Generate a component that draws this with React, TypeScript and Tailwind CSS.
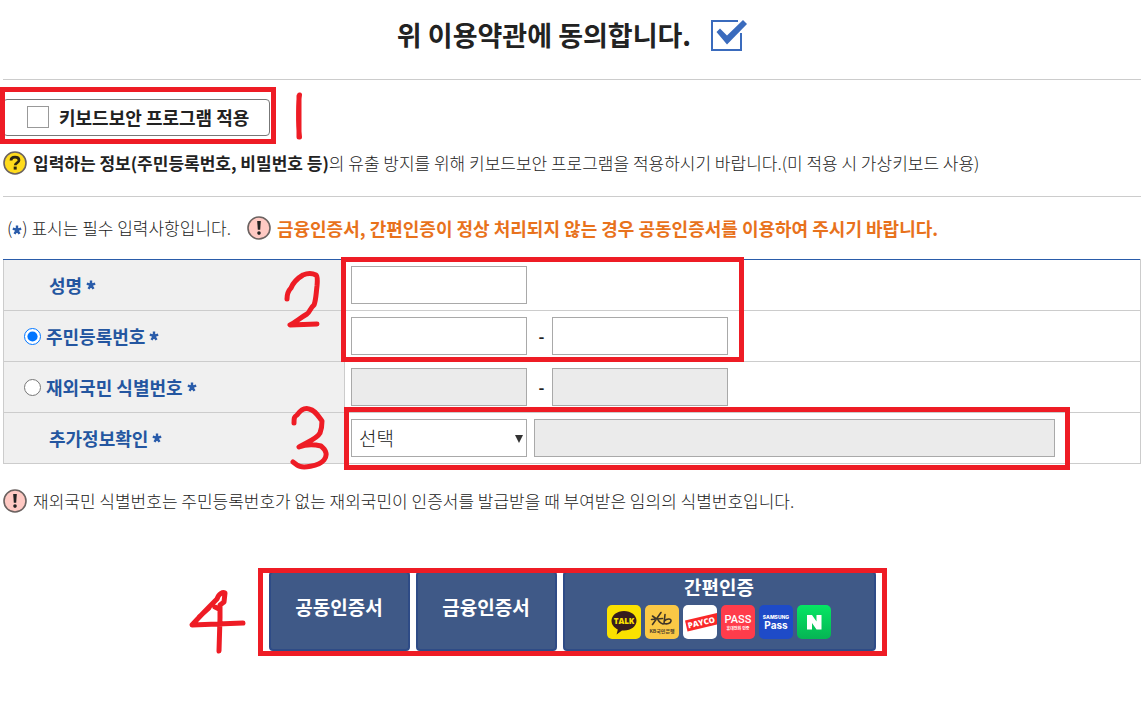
import { useState, type ReactNode } from 'react';

const FIELD = 'h-[38px] w-44 border border-[#a9a9a9] bg-white px-2 text-lg outline-none disabled:bg-[#ebebeb]';

function Star() {
  return (
    <svg viewBox="0 0 10 10" className="inline-block size-[10px] shrink-0" role="img" aria-label="필수">
      <path d="M5 5V.5M5 5L.8 3.700M5 5L9.200 3.700M5 5L2.500 8.900M5 5L7.500 8.900" stroke="#2a5caa" strokeWidth="2.4" />
    </svg>
  );
}

function MarkIcon({ kind }: { kind: 'question' | 'alert' }) {
  return (
    <svg viewBox="0 0 24 24" className="size-6 shrink-0" aria-hidden="true">
      <circle cx="12" cy="12" r="11" fill={kind === 'question' ? '#ffdb1c' : '#ffc9c3'} stroke="#6b6260" strokeWidth="1.6" />
      {kind === 'question' ? (
        <>
          <path d="M8 9.4C8 7 9.8 6.1 12 6.1s4 1.1 4 3.1c0 2.7-3.8 2.6-3.8 5" fill="none" stroke="#2d2613" strokeWidth="2.7" />
          <rect x="10.7" y="15.6" width="3" height="3" fill="#2d2613" />
        </>
      ) : (
        <>
          <path d="M10.2 5h3.6l-.6 8.8h-2.4z" fill="#222" />
          <circle cx="12" cy="17.1" r="1.8" fill="#222" />
        </>
      )}
    </svg>
  );
}

function Pen({ box, d, className }: { box: string; d: string; className: string }) {
  return (
    <svg viewBox={box} className={`pointer-events-none absolute ${className}`} fill="none" stroke="#ee1c25" strokeWidth="5" strokeLinecap="round" strokeLinejoin="round" aria-hidden="true">
      <path d={d} />
    </svg>
  );
}

function Frame({ className }: { className: string }) {
  return <div className={`pointer-events-none absolute border-5 border-[#ee1c25] ${className}`} />;
}

function Row({ head, children }: { head: ReactNode; children: ReactNode }) {
  return (
    <tr className="h-[51px] first:[&>*]:border-t-[#2a5caa]">
      <th scope="row" className="border border-[#ccc] bg-[#f0f0f0] p-0 text-left text-lg font-bold text-[#2456a0]">
        <div className="flex items-center pl-5">{head}</div>
      </th>
      <td className="border border-[#ccc] p-0">
        <div className="flex items-center pl-[6px]">{children}</div>
      </td>
    </tr>
  );
}

function Providers() {
  return (
    <span className="flex gap-1">
      <svg viewBox="0 0 34 34" className="size-[34px]" aria-label="TALK">
        <rect width="34" height="34" rx="5" fill="#fae100" />
        <path d="M17 6c7 0 12.5 4.3 12.5 9.8S24 25.5 17 25.5l-2-.1-5.4 4.2 1.2-5.2C7 22.800 4.500 19.500 4.500 15.800 4.500 10.300 10 6 17 6z" fill="#371d1e" />
        <text x="17" y="19" textAnchor="middle" fontSize="8" fontWeight="800" fontFamily="Open Sans, sans-serif" fill="#fae100">TALK</text>
      </svg>
      <svg viewBox="0 0 34 34" className="size-[34px]" aria-label="KB국민은행">
        <rect width="34" height="34" rx="5" fill="#fac846" />
        <path d="M7.500 11l4 3M16 7.500l-8.500 12M6.500 14.500l11-1M12.500 13.500c1 3 2.500 4.500 5.500 5.500M20 9.500l-1 9M19.500 16c2.500-3 7-2.500 6.500 0s-4 3.500-7 2.500" fill="none" stroke="#3f3427" strokeWidth="1.6" strokeLinecap="round" />
        <text x="17" y="28" textAnchor="middle" fontSize="5" fontWeight="700" fontFamily="Noto Sans CJK KR, sans-serif" fill="#4a3d2a">KB국민은행</text>
      </svg>
      <svg viewBox="0 0 34 34" className="size-[34px]" aria-label="PAYCO">
        <rect width="34" height="34" rx="5" fill="#fff" />
        <path d="M2 15.500L34 8v11.500L4.500 26.500z" fill="#fa2828" />
        <text x="5.500" y="23.500" fontSize="8" fontWeight="800" fontFamily="Open Sans, sans-serif" fill="#fff" transform="rotate(-13 5.500 23.500)">PAYCO</text>
      </svg>
      <svg viewBox="0 0 34 34" className="size-[34px]" aria-label="PASS">
        <rect width="34" height="34" rx="5" fill="#ff3c4b" />
        <text x="17" y="18" textAnchor="middle" fontSize="11" fontFamily="Roboto, sans-serif" fontWeight="500" fill="#fff">PASS</text>
        <text x="17" y="25" textAnchor="middle" fontSize="4" fontFamily="Noto Sans CJK KR, sans-serif" fill="#fff">휴대전화 인증</text>
      </svg>
      <svg viewBox="0 0 34 34" className="size-[34px]" aria-label="SAMSUNG Pass">
        <rect width="34" height="34" rx="5" fill="#1e4bc8" />
        <text x="17" y="14" textAnchor="middle" fontSize="5" fontWeight="800" fontFamily="Inter, sans-serif" fill="#fff">SAMSUNG</text>
        <text x="17" y="24" textAnchor="middle" fontSize="10" fontWeight="700" fontFamily="Inter, sans-serif" fill="#fff">Pass</text>
      </svg>
      <svg viewBox="0 0 34 34" className="size-[34px]" aria-label="N">
        <defs>
          <linearGradient id="green" x1="0" y1="0" x2="0" y2="1">
            <stop offset="0" stopColor="#05e663" />
            <stop offset="1" stopColor="#06b454" />
          </linearGradient>
        </defs>
        <rect width="34" height="34" rx="5" fill="url(#green)" />
        <path d="M10 10h5l4.500 6.500V10h5v14.500h-5L15 18v6.500h-5z" fill="#fff" />
      </svg>
    </span>
  );
}

export default function App() {
  const [idType, setIdType] = useState('resident');

  return (
    <main className="min-h-[712px] bg-white pl-[3px] font-['Noto_Sans_CJK_KR','Noto_Sans_CJK_SC',sans-serif] text-[#222]">
      <label className="flex h-20 items-center justify-center gap-5 border-b border-[#ccc] pb-2 text-[27px] font-bold">
        위 이용약관에 동의합니다.
        <span className="grid">
          <input type="checkbox" defaultChecked className="col-start-1 row-start-1 size-8 appearance-none" />
          <svg viewBox="0 0 36 32" className="pointer-events-none col-start-1 row-start-1 h-8 w-9" aria-hidden="true">
            <path d="M30 13v17H1V1h26" fill="none" stroke="#3a6bbd" strokeWidth="2" />
            <path d="M5.500 12l3.500-3.500 7 7L32 0l4 4-20 20.500z" fill="#3a6bbd" />
          </svg>
        </span>
      </label>

      <section className="border-b border-[#ccc] pt-[19px] pb-[21px]">
        <div className="relative w-[267px]">
          <label className="flex h-[37px] items-center gap-[10px] rounded border border-[#777] pb-[2px] pl-[23px] text-lg font-bold">
            <input type="checkbox" className="size-[22px] appearance-none border border-[#999] bg-white" />
            키보드보안 프로그램 적용
          </label>
          <Frame className="-top-3 -right-[6px] -bottom-2 -left-[3px]" />
          <Pen box="0 0 10 50" d="M5.500 4C4.500 9 4 32 5.500 46M5 5V46" className="-top-2 left-[291px] h-[50px] w-[10px]" />
        </div>
        <p className="mt-[15px] flex items-center gap-[6px] text-[17px] leading-6 font-light">
          <MarkIcon kind="question" />
          <span>
            <b className="font-bold">입력하는 정보(주민등록번호, 비밀번호 등)</b>의 유출 방지를 위해 키보드보안 프로그램을 적용하시기 바랍니다.(미 적용 시 가상키보드 사용)
          </span>
        </p>
      </section>

      <div className="flex h-[62px] items-center gap-4 leading-6">
        <p className="pl-1 text-[17px] font-light">(<Star />) 표시는 필수 입력사항입니다.</p>
        <p className="flex items-center gap-[6px] text-lg leading-6 font-bold text-[#e8721c]">
          <MarkIcon kind="alert" />
          금융인증서, 간편인증이 정상 처리되지 않는 경우 공동인증서를 이용하여 주시기 바랍니다.
        </p>
      </div>

      <section className="relative">
        <table className="w-full table-fixed border-collapse">
          <colgroup>
            <col className="w-[341px]" />
            <col />
          </colgroup>
          <tbody>
            <Row head={<label htmlFor="name" className="flex items-center gap-1 pl-[25px]">성명 <Star /></label>}>
              <input id="name" type="text" className={FIELD} />
            </Row>
            <Row
              head={
                <label className="flex items-center gap-1">
                  <input type="radio" name="idType" className="mr-px size-[17px]" checked={idType === 'resident'} onChange={() => setIdType('resident')} />
                  주민등록번호 <Star />
                </label>
              }
            >
              <input type="text" aria-label="주민등록번호 앞자리" className={FIELD} disabled={idType !== 'resident'} />
              <span className="w-[25px] pl-1 text-center font-bold">-</span>
              <input type="password" aria-label="주민등록번호 뒷자리" className={FIELD} disabled={idType !== 'resident'} />
            </Row>
            <Row
              head={
                <label className="flex items-center gap-1">
                  <input type="radio" name="idType" className="mr-px size-[17px]" checked={idType === 'overseas'} onChange={() => setIdType('overseas')} />
                  재외국민 식별번호 <Star />
                </label>
              }
            >
              <input type="text" aria-label="식별번호 앞자리" className={FIELD} disabled={idType !== 'overseas'} />
              <span className="w-[25px] pl-1 text-center font-bold">-</span>
              <input type="password" aria-label="식별번호 뒷자리" className={FIELD} disabled={idType !== 'overseas'} />
            </Row>
            <Row head={<label htmlFor="extra" className="flex items-center gap-1 pl-[25px]">추가정보확인 <Star /></label>}>
              <div className="relative mr-[7px]">
                <select id="extra" className="block h-[38px] w-44 appearance-none border border-[#a9a9a9] bg-white px-[7px] text-[19px] font-light">
                  <option>선택</option>
                </select>
                <svg viewBox="0 0 8 8" className="pointer-events-none absolute top-4 right-1 size-2" aria-hidden="true">
                  <path d="M0 0h8L4 8z" fill="#333" />
                </svg>
              </div>
              <input type="text" aria-label="추가정보" disabled className="mr-[85px] h-[38px] min-w-0 flex-1 border border-[#a9a9a9] bg-[#ebebeb]" />
            </Row>
          </tbody>
        </table>
        <Frame className="-top-[2px] left-[338px] h-[105px] w-[403px]" />
        <Frame className="right-[71px] -bottom-[6px] left-[341px] h-[63px]" />
        <Pen box="282 270 42 60" d="M287 299C287 294 288 291 291 288C293 283 298 278 303 275Q310 272 316 275Q318 276 317 286C316 294 316 300 314 305C310 308 310 312 307 314C300 318 296 322 290 325L317 324" className="top-[11px] left-[279px] h-[60px] w-[42px]" />
        <Pen box="288 405 44 66" d="M294 423C294 418 294 417 297 415Q303 407 309 409C315 410 318 416 322 421Q322 428 320 433C316 440 306 442 299 447Q309 443 321 446C326 450 328 455 324 460C319 466 302 469 297 465L293 462" className="top-[146px] left-[285px] h-[66px] w-11" />
      </section>

      <p className="mt-[25px] flex items-center gap-[6px] text-[17px] leading-6 font-light">
        <MarkIcon kind="alert" />
        재외국민 식별번호는 주민등록번호가 없는 재외국민이 인증서를 발급받을 때 부여받은 임의의 식별번호입니다.
      </p>

      <div className="mt-[58px] flex justify-center">
        <div className="relative flex gap-[6px] text-[19px] font-bold text-white">
          <button type="button" className="h-20 w-[141px] rounded-sm border-2 border-[#2e4b86] bg-[#3f5987] pb-2">공동인증서</button>
          <button type="button" className="h-20 w-[141px] rounded-sm border-2 border-[#2e4b86] bg-[#3f5987] pb-2">금융인증서</button>
          <button type="button" className="flex h-20 w-[313px] flex-col items-center gap-1 rounded-sm border-2 border-[#2e4b86] bg-[#3f5987] leading-7">
            간편인증
            <Providers />
          </button>
          <Frame className="-top-[3px] -right-[11px] -bottom-[5px] -left-[11px]" />
          <Pen box="186 588 62 70" d="M242 623L191 625C200 615 208 607 216 599C218 593 222 592 224 593L223 602L219 605V618L218 651M214 607L218 609M198 617L208 608" className="top-[17px] -left-[82px] h-[70px] w-[62px]" />
        </div>
      </div>
    </main>
  );
}
